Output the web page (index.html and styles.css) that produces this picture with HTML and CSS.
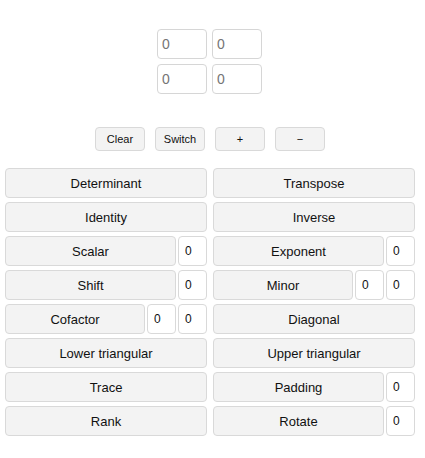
FILE: index.html
```html
<!DOCTYPE html>
<html>
<head>
<meta charset="utf-8">
<link rel="stylesheet" href="styles.css">
</head>
<body>
<div class="app">
  <div class="matrix">
    <input class="cell" placeholder="0">
    <input class="cell" placeholder="0">
    <input class="cell" placeholder="0">
    <input class="cell" placeholder="0">
  </div>
  <div class="controls">
    <button class="small">Clear</button>
    <button class="small">Switch</button>
    <button class="small">+</button>
    <button class="small">−</button>
  </div>
  <div class="ops">
    <div class="op"><button class="big">Determinant</button></div>
    <div class="op"><button class="big">Transpose</button></div>
    <div class="op"><button class="big">Identity</button></div>
    <div class="op"><button class="big">Inverse</button></div>
    <div class="op"><button class="big">Scalar</button><input class="arg" value="0"></div>
    <div class="op"><button class="big">Exponent</button><input class="arg" value="0"></div>
    <div class="op"><button class="big">Shift</button><input class="arg" value="0"></div>
    <div class="op"><button class="big">Minor</button><input class="arg" value="0"><input class="arg" value="0"></div>
    <div class="op"><button class="big">Cofactor</button><input class="arg" value="0"><input class="arg" value="0"></div>
    <div class="op"><button class="big">Diagonal</button></div>
    <div class="op"><button class="big">Lower triangular</button></div>
    <div class="op"><button class="big">Upper triangular</button></div>
    <div class="op"><button class="big">Trace</button></div>
    <div class="op"><button class="big">Padding</button><input class="arg" value="0"></div>
    <div class="op"><button class="big">Rank</button></div>
    <div class="op"><button class="big">Rotate</button><input class="arg" value="0"></div>
  </div>
</div>
</body>
</html>
```
FILE: styles.css
```css
html, body {
  margin: 0;
  padding: 0;
  background: #fff;
  font-family: Arial, "Liberation Sans", sans-serif;
}
.app {
  width: 410px;
  margin-left: 5px;
  padding-top: 29px;
}
.matrix {
  display: grid;
  grid-template-columns: 50px 50px;
  gap: 5px;
  justify-content: start;
  padding-left: 152px;
}
.cell {
  box-sizing: border-box;
  width: 50px;
  height: 30px;
  border: 1px solid #d6d6d6;
  border-radius: 4px;
  padding: 0 4px;
  font-family: Arial, "Liberation Sans", sans-serif;
  font-size: 14px;
  color: #333;
  outline: none;
}
.cell::placeholder {
  color: #757575;
}
.controls {
  display: flex;
  justify-content: center;
  gap: 10px;
  margin-top: 33px;
}
button {
  font-family: Arial, "Liberation Sans", sans-serif;
  color: #111;
  background: #f3f3f3;
  border: 1px solid #d9d9d9;
  border-radius: 4px;
  padding: 0;
  box-sizing: border-box;
}
.small {
  width: 50px;
  height: 24px;
  font-size: 11px;
}
.ops {
  display: grid;
  grid-template-columns: 1fr 1fr;
  column-gap: 6px;
  row-gap: 4px;
  margin-top: 17px;
}
.op {
  display: flex;
  gap: 2px;
  height: 30px;
}
.big {
  flex: 1;
  height: 30px;
  font-size: 13px;
}
.arg {
  box-sizing: border-box;
  width: 29px;
  height: 30px;
  border: 1px solid #d9d9d9;
  border-radius: 4px;
  padding: 0 0 0 6px;
  font-family: Arial, "Liberation Sans", sans-serif;
  font-size: 12px;
  color: #111;
  outline: none;
}
```
